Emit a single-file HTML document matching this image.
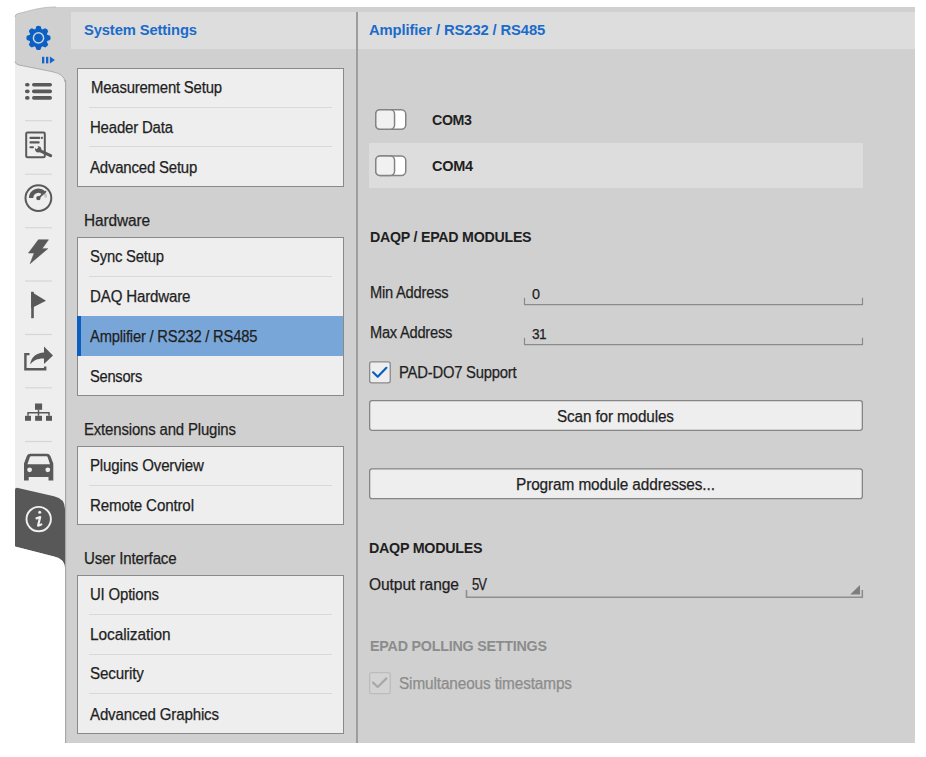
<!DOCTYPE html><html><head><meta charset="utf-8"><style>
*{margin:0;padding:0;box-sizing:border-box}
html,body{width:926px;height:757px;background:#fff;overflow:hidden;position:relative;font-family:"Liberation Sans",sans-serif}
.a{position:absolute}
.t{position:absolute;white-space:nowrap;line-height:16px;transform-origin:0 0;-webkit-text-stroke:0.25px currentColor}
</style></head><body>
<div class="a" style="left:65px;top:7px;width:850px;height:736px;background:#d0d0d0;"></div><div class="a" style="left:71px;top:12px;width:285px;height:37px;background:#dddddd;"></div><div class="a" style="left:358px;top:12px;width:557px;height:37px;background:#dddddd;"></div><div class="a" style="left:356.1px;top:12px;width:1.6px;height:731px;background:#9d9d9d;"></div><div class="a" style="left:369px;top:143px;width:494px;height:45px;background:#dddddd;"></div><div class="a" style="left:77px;top:68px;width:267px;height:119px;background:#eeeeee;border:1px solid #8a8a8a"></div><div class="a" style="left:89px;top:107px;width:243px;height:1px;background:#d9d9d9;"></div><div class="a" style="left:89px;top:146px;width:243px;height:1px;background:#d9d9d9;"></div><div class="a" style="left:77px;top:237px;width:267px;height:159px;background:#eeeeee;border:1px solid #8a8a8a"></div><div class="a" style="left:89px;top:276px;width:243px;height:1px;background:#d9d9d9;"></div><div class="a" style="left:77px;top:316px;width:266px;height:40px;background:#79a6d8;"></div><div class="a" style="left:77px;top:316px;width:4px;height:40px;background:#0a5ec0;"></div><div class="a" style="left:77px;top:446px;width:267px;height:79px;background:#eeeeee;border:1px solid #8a8a8a"></div><div class="a" style="left:89px;top:485px;width:243px;height:1px;background:#d9d9d9;"></div><div class="a" style="left:77px;top:575px;width:267px;height:159px;background:#eeeeee;border:1px solid #8a8a8a"></div><div class="a" style="left:89px;top:614px;width:243px;height:1px;background:#d9d9d9;"></div><div class="a" style="left:89px;top:654px;width:243px;height:1px;background:#d9d9d9;"></div><div class="a" style="left:89px;top:693px;width:243px;height:1px;background:#d9d9d9;"></div><svg class="a" style="left:0;top:0" width="926" height="757">
<path d="M15 743 V17 Q15 14.2 18 13.6 C30 11 38 7.2 56 7 H66 V743 Z" fill="#d0d0d0"/>
<path d="M15 17 Q15 14.2 18 13.6 C30 11 38 7.2 56 7" fill="none" stroke="#b4b4b4" stroke-width="0.8"/>
<path d="M15 61.5 Q15.5 64.2 19 65 L52 71.6 Q64.6 74 65 82 V515 H15 Z" fill="#eeeeee"/>
<path d="M15 61.5 Q15.5 64.2 19 65 L52 71.6 Q64.6 74 65 82" fill="none" stroke="#a6a6a6" stroke-width="0.9"/>
<path d="M15 490 Q15 487.2 18 487.9 L54 496.2 Q65 498.5 65 509 V568 Q64.5 559 54 556.6 L15 546.5 Z" fill="#585858"/>
<path d="M15 546.5 L54 556.6 Q64.5 559 65 568 V743 H15 Z" fill="#ffffff"/>
<rect x="65" y="80" width="1.2" height="663" fill="#a8a8a8"/>
<path d="M35.1 29.9 L36.4 26.299999999999997 Q38.5 25.2 40.6 26.299999999999997 L41.9 29.9 Z" fill="#0c60c4" transform="rotate(0 38.5 37.9)"/><path d="M35.1 29.9 L36.4 26.299999999999997 Q38.5 25.2 40.6 26.299999999999997 L41.9 29.9 Z" fill="#0c60c4" transform="rotate(45 38.5 37.9)"/><path d="M35.1 29.9 L36.4 26.299999999999997 Q38.5 25.2 40.6 26.299999999999997 L41.9 29.9 Z" fill="#0c60c4" transform="rotate(90 38.5 37.9)"/><path d="M35.1 29.9 L36.4 26.299999999999997 Q38.5 25.2 40.6 26.299999999999997 L41.9 29.9 Z" fill="#0c60c4" transform="rotate(135 38.5 37.9)"/><path d="M35.1 29.9 L36.4 26.299999999999997 Q38.5 25.2 40.6 26.299999999999997 L41.9 29.9 Z" fill="#0c60c4" transform="rotate(180 38.5 37.9)"/><path d="M35.1 29.9 L36.4 26.299999999999997 Q38.5 25.2 40.6 26.299999999999997 L41.9 29.9 Z" fill="#0c60c4" transform="rotate(225 38.5 37.9)"/><path d="M35.1 29.9 L36.4 26.299999999999997 Q38.5 25.2 40.6 26.299999999999997 L41.9 29.9 Z" fill="#0c60c4" transform="rotate(270 38.5 37.9)"/><path d="M35.1 29.9 L36.4 26.299999999999997 Q38.5 25.2 40.6 26.299999999999997 L41.9 29.9 Z" fill="#0c60c4" transform="rotate(315 38.5 37.9)"/>
<circle cx="38.5" cy="37.9" r="9.2" fill="#0c60c4"/>
<circle cx="38.5" cy="37.9" r="5.1" fill="none" stroke="#cdd3da" stroke-width="1.5"/>
<rect x="42" y="56.8" width="2.3" height="6.6" fill="#1565c8"/>
<rect x="46" y="56.8" width="2.3" height="6.6" fill="#1565c8"/>
<path d="M49.9 56.6 L54.9 60.1 L49.9 63.6 Z" fill="#1565c8"/>
<rect x="25" y="120.1" width="27" height="1.2" fill="#d6d6d6"/><rect x="25" y="173.6" width="27" height="1.2" fill="#d6d6d6"/><rect x="25" y="227.1" width="27" height="1.2" fill="#d6d6d6"/><rect x="25" y="280.4" width="27" height="1.2" fill="#d6d6d6"/><rect x="25" y="333.9" width="27" height="1.2" fill="#d6d6d6"/><rect x="25" y="387.2" width="27" height="1.2" fill="#d6d6d6"/><rect x="25" y="440.9" width="27" height="1.2" fill="#d6d6d6"/>
<g fill="#595959">
<rect x="25" y="82.9" width="4.6" height="3.7" rx="1.8"/><rect x="32" y="82.9" width="20" height="3.7" rx="1.8"/>
<rect x="25" y="89.5" width="4.6" height="3.7" rx="1.8"/><rect x="32" y="89.5" width="20" height="3.7" rx="1.8"/>
<rect x="25" y="96.1" width="4.6" height="3.7" rx="1.8"/><rect x="32" y="96.1" width="20" height="3.7" rx="1.8"/>
</g>
<rect x="26.2" y="132.4" width="18.6" height="24.8" rx="1.3" fill="none" stroke="#595959" stroke-width="2"/>
<g fill="#595959">
<rect x="29.4" y="136.8" width="11" height="2.1" rx="1"/><rect x="41" y="136.8" width="1.8" height="2.1"/>
<rect x="29.4" y="141.3" width="10.3" height="2.1" rx="1"/>
<rect x="29.4" y="146.2" width="4.6" height="2.1" rx="1"/>
</g>
<path d="M39.8 150.6 L50.6 155.6" stroke="#595959" stroke-width="3.2" stroke-linecap="round"/>
<circle cx="38.2" cy="149.3" r="3.1" fill="#595959"/>
<rect x="35" y="145.2" width="2.6" height="3.6" fill="#eeeeee" transform="rotate(-40 36.3 147)"/>
<circle cx="38.4" cy="198.1" r="12.9" fill="none" stroke="#595959" stroke-width="2"/>
<path d="M31.1 198 A7.3 7.3 0 0 1 43.6 192.9" fill="none" stroke="#595959" stroke-width="4.4"/>
<path d="M44.2 192.4 A7.3 7.3 0 0 1 45.7 197.5" fill="none" stroke="#c4c4c4" stroke-width="2.5"/>
<path d="M38.4 198.1 L45.5 191.6" stroke="#595959" stroke-width="1.8" stroke-linecap="round"/>
<circle cx="38.4" cy="198.1" r="2.2" fill="#595959"/>
<path d="M38.4 239.8 H48.4 L42.1 248.7 H47.7 L30.2 263.6 L34.2 253 H28.5 Z" fill="#595959" stroke="#595959" stroke-width="0.6" stroke-linejoin="round"/>
<rect x="31.2" y="291.8" width="2.6" height="26.4" fill="#595959"/>
<path d="M31.2 291.8 L46 300.7 L31.2 308.3 Z" fill="#595959"/>
<path d="M29.5 354.1 H25.4 V369.2 H45.2 V366.4" fill="none" stroke="#595959" stroke-width="2.4"/>
<path d="M30.2 364.6 C31 357 36.5 352.6 44 352.4 V346.6 L53 355.5 L44 364 V358.4 C38 358.2 33 360.2 30.2 364.6 Z" fill="#595959"/>
<g fill="#595959">
<rect x="35" y="403.5" width="7.1" height="6.3"/>
<rect x="25" y="415.8" width="6" height="5"/><rect x="35.1" y="415.8" width="6.9" height="5"/><rect x="46" y="415.8" width="6" height="5"/>
</g>
<path d="M38.5 409.8 V415.8 M28 415.8 V412.8 H49 V415.8" fill="none" stroke="#595959" stroke-width="1.5"/>
<path d="M24 463.5 L26.8 456 Q27.8 453.8 30.2 453.8 H47 Q49.4 453.8 50.4 456 L53.3 463.5 V480.6 H48.5 V477 H28.7 V480.6 H24 Z M27.4 464.3 H50 L47.6 457.1 Q47.3 456.3 46.5 456.3 H31 Q30.2 456.3 29.9 457.1 Z" fill="#595959" fill-rule="evenodd"/>
<circle cx="29.6" cy="469.8" r="2.4" fill="#eeeeee"/><circle cx="47.8" cy="469.8" r="2.4" fill="#eeeeee"/>
<circle cx="38.7" cy="519.1" r="12.2" fill="none" stroke="#f0f0f0" stroke-width="1.9"/>
<circle cx="39.7" cy="512.3" r="1.5" fill="#f0f0f0"/>
<path d="M36.5 518.4 L40.2 517.1 L38.1 525.6 L41.3 524.5" fill="none" stroke="#f0f0f0" stroke-width="2.2" stroke-linejoin="round" stroke-linecap="round"/>
</svg><svg class="a" style="left:0;top:0" width="926" height="757"><rect x="375.75" y="109.75" width="30" height="19.5" rx="4.5" fill="#ffffff" stroke="#838383" stroke-width="1.5"/><rect x="375.75" y="109.75" width="18.8" height="19.5" rx="4.2" fill="#f1f1f1" stroke="#838383" stroke-width="1.5"/><rect x="375.75" y="155.95" width="30" height="19.5" rx="4.5" fill="#ffffff" stroke="#838383" stroke-width="1.5"/><rect x="375.75" y="155.95" width="18.8" height="19.5" rx="4.2" fill="#f1f1f1" stroke="#838383" stroke-width="1.5"/><rect x="369.65" y="361.95" width="20.6" height="20.9" rx="2" fill="#eeeeee" stroke="#8a8a8a" stroke-width="1.3"/><path d="M373.1 372.3 L377.7 376.7 L386.4 367.8" fill="none" stroke="#0b5dc2" stroke-width="2.2" stroke-linecap="round" stroke-linejoin="round"/><rect x="369.65" y="672.7" width="20.6" height="21" rx="2" fill="#d3d3d3" stroke="#bcbcbc" stroke-width="1.3"/><path d="M373.1 682.6 L377.7 687 L386.4 678.4" fill="none" stroke="#a8a8a8" stroke-width="2.2" stroke-linecap="round" stroke-linejoin="round"/><rect x="369.65" y="400.65" width="492.7" height="29.7" rx="2.5" fill="#eeeeee" stroke="#858585" stroke-width="1.3"/><rect x="369.65" y="468.95" width="492.7" height="29.7" rx="2.5" fill="#eeeeee" stroke="#858585" stroke-width="1.3"/><path d="M524.5 297.7 V304.7 H862.5 V297.7" fill="none" stroke="#8a8a8a" stroke-width="1.2"/><path d="M524.5 337.7 V344.7 H862.5 V337.7" fill="none" stroke="#8a8a8a" stroke-width="1.2"/><path d="M466.5 590 V597.2 H862.3 V590" fill="none" stroke="#8e8e8e" stroke-width="1.6"/><path d="M850.2 594.6 L860 585.1 V594.6 Z" fill="#7e7e7e"/></svg>
<div class="t" style="left:84.0px;top:22.4px;font-size:15.5px;color:#1b6bcb;letter-spacing:-0.136px;font-weight:bold;-webkit-text-stroke:0;transform:scaleX(0.9520)">System Settings</div>
<div class="t" style="left:90.5px;top:80.2px;font-size:16px;color:#1f1f1f;letter-spacing:-0.204px;transform:scaleX(0.9303)">Measurement Setup</div>
<div class="t" style="left:89.7px;top:120.0px;font-size:16px;color:#1f1f1f;letter-spacing:-0.193px;transform:scaleX(0.9348)">Header Data</div>
<div class="t" style="left:89.7px;top:159.8px;font-size:16px;color:#1f1f1f;letter-spacing:-0.195px;transform:scaleX(0.9339)">Advanced Setup</div>
<div class="t" style="left:83.9px;top:213.3px;font-size:16px;color:#1f1f1f;letter-spacing:-0.120px;transform:scaleX(0.9632)">Hardware</div>
<div class="t" style="left:89.7px;top:249.4px;font-size:16px;color:#1f1f1f;letter-spacing:-0.217px;transform:scaleX(0.9265)">Sync Setup</div>
<div class="t" style="left:89.7px;top:289.0px;font-size:16px;color:#1f1f1f;letter-spacing:-0.181px;transform:scaleX(0.9438)">DAQ Hardware</div>
<div class="t" style="left:89.7px;top:329.0px;font-size:16px;color:#1f1f1f;letter-spacing:-0.202px;transform:scaleX(0.9202)">Amplifier / RS232 / RS485</div>
<div class="t" style="left:89.7px;top:368.7px;font-size:16px;color:#1f1f1f;letter-spacing:-0.267px;transform:scaleX(0.9160)">Sensors</div>
<div class="t" style="left:83.9px;top:422.1px;font-size:16px;color:#1f1f1f;letter-spacing:-0.171px;transform:scaleX(0.9340)">Extensions and Plugins</div>
<div class="t" style="left:89.7px;top:458.2px;font-size:16px;color:#1f1f1f;letter-spacing:-0.163px;transform:scaleX(0.9393)">Plugins Overview</div>
<div class="t" style="left:89.7px;top:497.7px;font-size:16px;color:#1f1f1f;letter-spacing:-0.155px;transform:scaleX(0.9451)">Remote Control</div>
<div class="t" style="left:83.9px;top:551.3px;font-size:16px;color:#1f1f1f;letter-spacing:-0.152px;transform:scaleX(0.9400)">User Interface</div>
<div class="t" style="left:89.8px;top:587.1px;font-size:16px;color:#1f1f1f;letter-spacing:-0.183px;transform:scaleX(0.9332)">UI Options</div>
<div class="t" style="left:89.8px;top:627.0px;font-size:16px;color:#1f1f1f;letter-spacing:-0.089px;transform:scaleX(0.9650)">Localization</div>
<div class="t" style="left:89.8px;top:666.2px;font-size:16px;color:#1f1f1f;letter-spacing:-0.143px;transform:scaleX(0.9472)">Security</div>
<div class="t" style="left:89.8px;top:706.5px;font-size:16px;color:#1f1f1f;letter-spacing:-0.166px;transform:scaleX(0.9418)">Advanced Graphics</div>
<div class="t" style="left:369.0px;top:22.4px;font-size:15.5px;color:#1b6bcb;letter-spacing:-0.120px;font-weight:bold;-webkit-text-stroke:0;transform:scaleX(0.9533)">Amplifier / RS232 / RS485</div>
<div class="t" style="left:432.4px;top:111.7px;font-size:15.5px;color:#1f1f1f;letter-spacing:-0.399px;font-weight:bold;-webkit-text-stroke:0;transform:scaleX(0.9177)">COM3</div>
<div class="t" style="left:432.4px;top:157.6px;font-size:15.5px;color:#1f1f1f;letter-spacing:-0.315px;font-weight:bold;-webkit-text-stroke:0;transform:scaleX(0.9353)">COM4</div>
<div class="t" style="left:369.7px;top:228.9px;font-size:15.5px;color:#1f1f1f;letter-spacing:-0.271px;font-weight:bold;-webkit-text-stroke:0;transform:scaleX(0.9168)">DAQP / EPAD MODULES</div>
<div class="t" style="left:369.5px;top:285.0px;font-size:16px;color:#1f1f1f;letter-spacing:-0.236px;transform:scaleX(0.9173)">Min Address</div>
<div class="t" style="left:531.7px;top:285.5px;font-size:15px;color:#1f1f1f;letter-spacing:-0.086px;transform:scaleX(0.9589)">0</div>
<div class="t" style="left:369.5px;top:325.4px;font-size:16px;color:#1f1f1f;letter-spacing:-0.255px;transform:scaleX(0.9150)">Max Address</div>
<div class="t" style="left:531.5px;top:325.9px;font-size:15px;color:#1f1f1f;letter-spacing:-0.496px;transform:scaleX(0.9080)">31</div>
<div class="t" style="left:398.9px;top:365.1px;font-size:16px;color:#1f1f1f;letter-spacing:-0.227px;transform:scaleX(0.9250)">PAD-DO7 Support</div>
<div class="t" style="left:557.0px;top:408.8px;font-size:16px;color:#1f1f1f;letter-spacing:-0.125px;transform:scaleX(0.9541)">Scan for modules</div>
<div class="t" style="left:516.0px;top:476.8px;font-size:16px;color:#1f1f1f;letter-spacing:-0.105px;transform:scaleX(0.9606)">Program module addresses...</div>
<div class="t" style="left:369.4px;top:539.8px;font-size:15.5px;color:#1f1f1f;letter-spacing:-0.289px;font-weight:bold;-webkit-text-stroke:0;transform:scaleX(0.9226)">DAQP MODULES</div>
<div class="t" style="left:369.0px;top:577.2px;font-size:16px;color:#1f1f1f;letter-spacing:-0.077px;transform:scaleX(0.9724)">Output range</div>
<div class="t" style="left:472.2px;top:577.2px;font-size:16px;color:#1f1f1f;letter-spacing:-1.143px;transform:scaleX(0.8140)">5V</div>
<div class="t" style="left:369.5px;top:637.7px;font-size:15.5px;color:#8c8c8c;letter-spacing:-0.249px;font-weight:bold;-webkit-text-stroke:0;transform:scaleX(0.9221)">EPAD POLLING SETTINGS</div>
<div class="t" style="left:399.3px;top:675.9px;font-size:16px;color:#8c8c8c;letter-spacing:-0.116px;transform:scaleX(0.9577)">Simultaneous timestamps</div>
</body></html>
